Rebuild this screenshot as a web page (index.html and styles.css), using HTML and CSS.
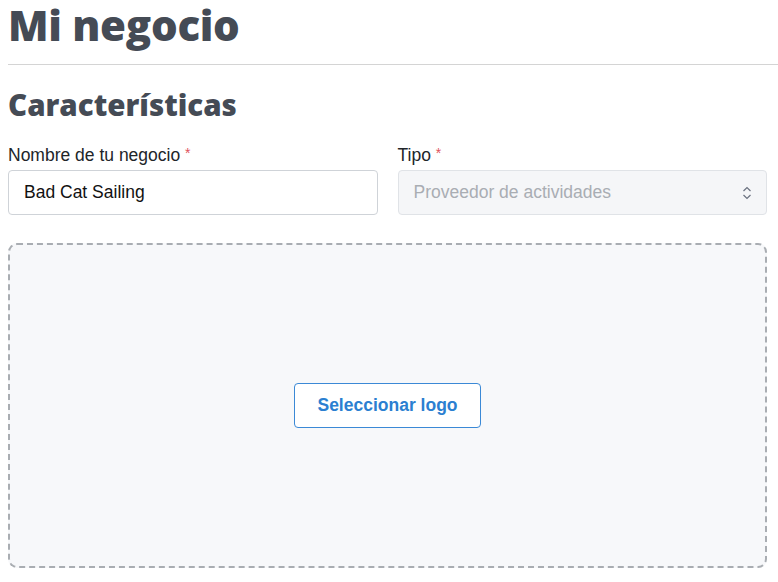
FILE: index.html
```html
<!DOCTYPE html>
<html lang="es">
<head>
<meta charset="utf-8">
<title>Mi negocio</title>
<link rel="stylesheet" href="styles.css">
</head>
<body>
<div class="page">
  <h1 class="title">Mi negocio</h1>
  <hr class="divider">
  <h2 class="subtitle">Características</h2>
  <div class="fields">
    <div class="field">
      <label class="label">Nombre de tu negocio <span class="req">*</span></label>
      <div class="input">Bad Cat Sailing</div>
    </div>
    <div class="field">
      <label class="label">Tipo <span class="req">*</span></label>
      <div class="input select">
        <span class="placeholder">Proveedor de actividades</span>
        <svg class="chev" width="10" height="16" viewBox="0 0 10 16"><path d="M1.5 6 L5 2.5 L8.5 6 M1.5 10 L5 13.5 L8.5 10" fill="none" stroke="#6b7280" stroke-width="1.2"/></svg>
      </div>
    </div>
  </div>
  <div class="dropzone">
    <button class="btn">Seleccionar logo</button>
  </div>
</div>
</body>
</html>
```

FILE: styles.css
```css
html, body { margin: 0; padding: 0; background: #fff; }
body { font-family: "Liberation Sans", Arial, sans-serif; overflow: hidden; }
.page { padding: 0 11px 0 8px; }
.title {
  margin: 0;
  font-family: "Open Sans", Lato, sans-serif;
  font-weight: 800;
  font-size: 42px;
  line-height: 50px;
  color: #454b55;
  letter-spacing: -0.3px;
}
.divider {
  border: 0;
  border-top: 1px solid #d4d4d4;
  margin: 14px -11px 0 0;
  height: 0;
}
.subtitle {
  margin: 20px 0 0;
  font-family: "Open Sans", Lato, sans-serif;
  font-weight: 800;
  font-size: 29.5px;
  line-height: 40px;
  color: #454b55;
}
.fields {
  display: grid;
  grid-template-columns: 1fr 1fr;
  column-gap: 20px;
  margin-top: 18px;
}
.label {
  display: block;
  font-size: 17.5px;
  line-height: 20px;
  color: #212529;
  margin-bottom: 5px;
}
.req { color: #e0525c; font-size: 14px; vertical-align: 3px; }
.input {
  box-sizing: border-box;
  height: 45px;
  border: 1px solid #cfd3d8;
  border-radius: 4px;
  padding: 0 15px;
  display: flex;
  align-items: center;
  font-size: 17.5px;
  color: #111;
  background: #fff;
}
.select {
  background: #f5f6f8;
  border-color: #e0e3e7;
  justify-content: space-between;
  padding-right: 14px;
}
.placeholder { color: #a9adb3; }
.dropzone {
  box-sizing: border-box;
  margin-top: 28px;
  height: 325px;
  border: 2px dashed #a9adb2;
  border-radius: 9px;
  background: #f7f8fa;
  display: flex;
  align-items: center;
  justify-content: center;
}
.btn {
  font-family: "Liberation Sans", Arial, sans-serif;
  font-weight: 700;
  font-size: 17.5px;
  color: #2b7fd1;
  background: #fff;
  border: 1px solid #3b89d6;
  border-radius: 4px;
  width: 187px;
  height: 45px;
  padding: 0;
}
```
